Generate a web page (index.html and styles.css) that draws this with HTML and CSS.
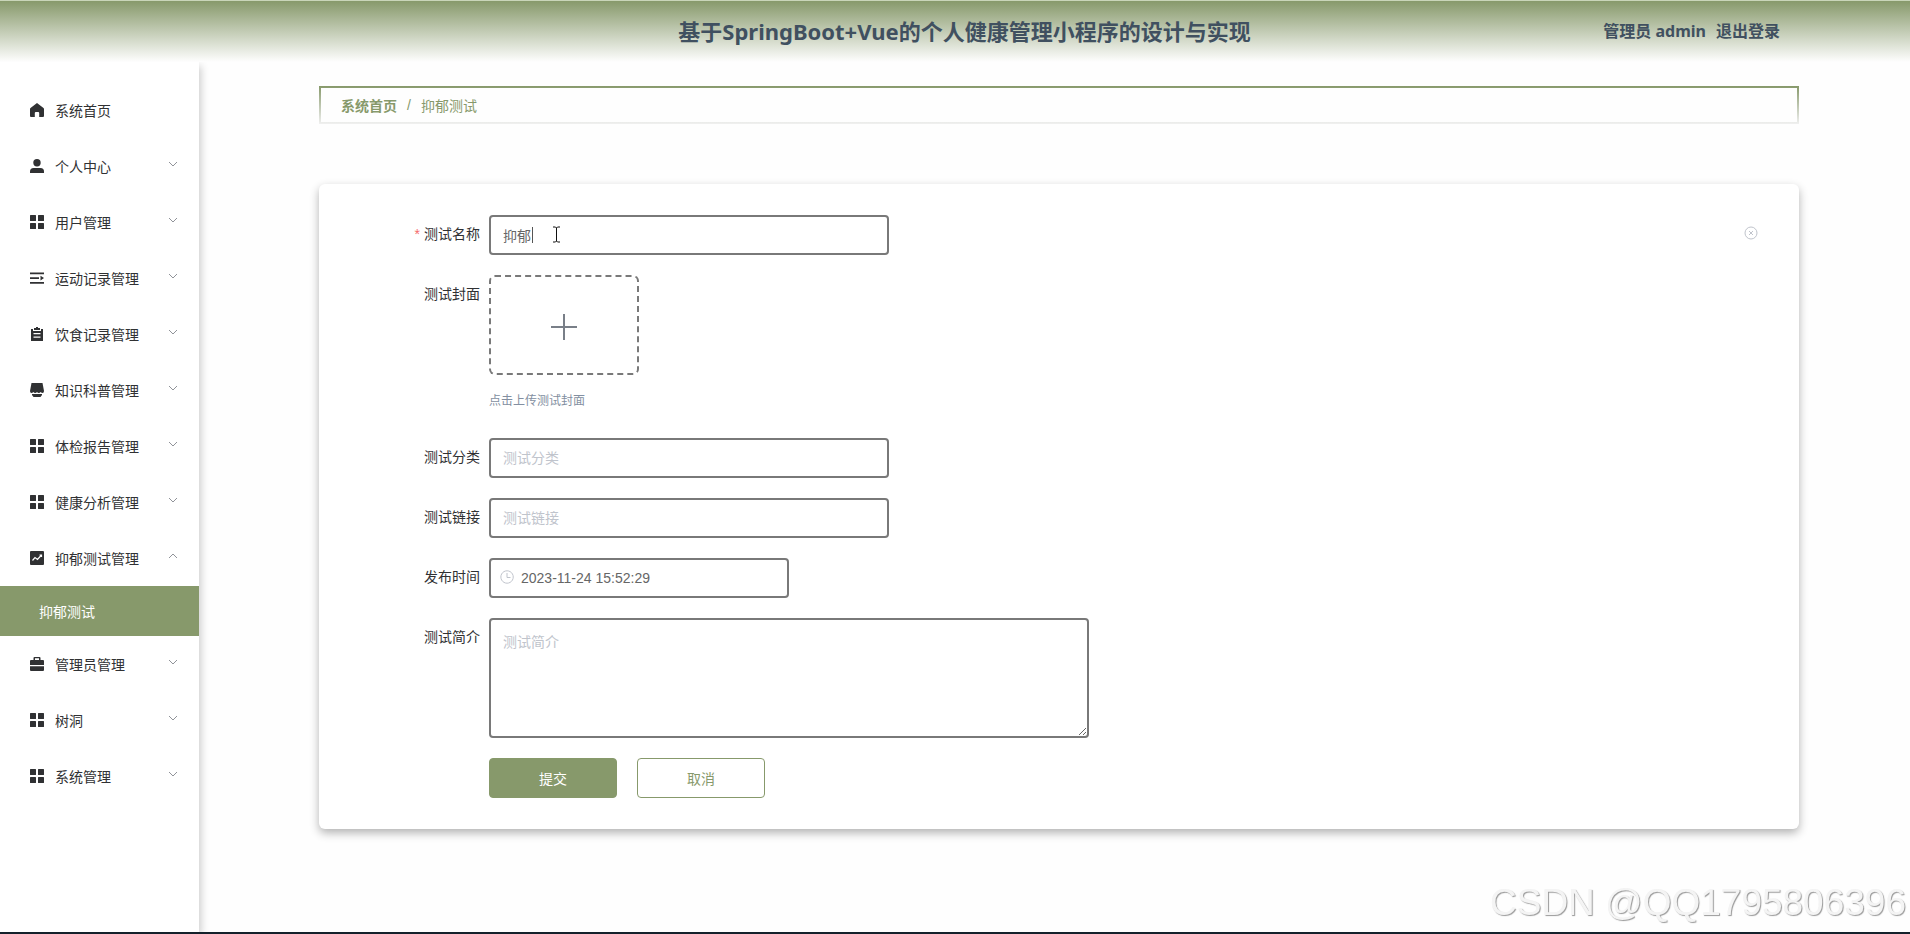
FILE: index.html
```
<!DOCTYPE html>
<html lang="zh-CN">
<head>
<meta charset="UTF-8">
<meta name="viewport" content="width=device-width, initial-scale=1.0">
<title>基于SpringBoot+Vue的个人健康管理小程序的设计与实现</title>
<link rel="stylesheet" href="styles.css">
</head>
<body>

<!-- Shared icons -->
<svg class="sprite" aria-hidden="true">
  <symbol id="i-menu" viewBox="0 0 14 14"><path d="M.6 0h4.8q.6 0 .6.6v4.8q0 .6-.6.6H.6Q0 6 0 5.400V.6Q0 0 .6 0zM8.600 0h4.800q.6 0 .6.6v4.800q0 .6-.6.6H8.600Q8 6 8 5.400V.6Q8 0 8.600 0zM.6 8h4.800q.6 0 .6.6v4.800q0 .6-.6.6H.6q-.6 0-.6-.6V8.600Q0 8 .6 8zM8.600 8h4.800q.6 0 .6.6v4.800q0 .6-.6.6H8.600q-.6 0-.6-.6V8.600Q8 8 8.600 8z"/></symbol>
  <symbol id="i-down" viewBox="0 0 10 10"><path d="M1 3l4 4 4-4" fill="none" stroke="currentColor"/></symbol>
  <symbol id="i-up" viewBox="0 0 10 10"><path d="M1 7l4-4 4 4" fill="none" stroke="currentColor"/></symbol>
</svg>

<header class="header">
  <h1 class="title">基于SpringBoot+Vue的个人健康管理小程序的设计与实现</h1>
  <div class="user">
    <span>管理员 admin</span>
    <a href="#">退出登录</a>
  </div>
</header>

<div class="container">
  <!-- Side menu -->
  <nav class="sidebar">
    <a class="item" href="#"><svg class="icon" viewBox="0 0 14 14"><path d="M7 0l6.500 5q.5.400.5 1v7q0 1-1 1H9.200v-4q0-1-1-1H5.800q-1 0-1 1v4H1q-1 0-1-1V6q0-.6.5-1z"/></svg><span>系统首页</span></a>
    <a class="item" href="#"><svg class="icon" viewBox="0 0 14 14"><circle cx="7" cy="3.700" r="3.700"/><path d="M0 14v-1.500Q0 9 3.500 9h7q3.500 0 3.500 3.500V14z"/></svg><span>个人中心</span><svg class="arrow"><use href="#i-down"/></svg></a>
    <a class="item" href="#"><svg class="icon"><use href="#i-menu"/></svg><span>用户管理</span><svg class="arrow"><use href="#i-down"/></svg></a>
    <a class="item" href="#"><svg class="icon" viewBox="0 0 14 14"><path d="M0 1.500h14v1.800H0zM0 6.200h9v1.800H0zM0 11h14v1.800H0zM10.500 4.800L14 7.100l-3.500 2.300z"/></svg><span>运动记录管理</span><svg class="arrow"><use href="#i-down"/></svg></a>
    <a class="item" href="#"><svg class="icon" viewBox="0 0 14 14"><path fill-rule="evenodd" d="M1 2h2v2h8V2h2v12H1zM3.500 6v1.200h7V6zM3.500 9.500v1.200h7V9.500zM4 1h2V0h2v1h2v2H4z"/></svg><span>饮食记录管理</span><svg class="arrow"><use href="#i-down"/></svg></a>
    <a class="item" href="#"><svg class="icon" viewBox="0 0 14 14"><path d="M1.500 0h11l1.500 8q0 2-1.500 2-1 0-1.800-1-.8 1-1.900 1T7 9Q6.300 10 5.200 10T3.300 9q-.8 1-1.800 1Q0 10 0 8zM2 11h10v1l-1.500 2h-7L2 12z"/></svg><span>知识科普管理</span><svg class="arrow"><use href="#i-down"/></svg></a>
    <a class="item" href="#"><svg class="icon"><use href="#i-menu"/></svg><span>体检报告管理</span><svg class="arrow"><use href="#i-down"/></svg></a>
    <a class="item" href="#"><svg class="icon"><use href="#i-menu"/></svg><span>健康分析管理</span><svg class="arrow"><use href="#i-down"/></svg></a>
    <a class="item" href="#"><svg class="icon" viewBox="0 0 14 14"><rect width="14" height="14" rx="1"/><path d="M2.500 9.500L5 6.500l2.500 2L11.500 4M9.500 4h2v2" fill="none" stroke="#fff" stroke-width="1.200"/></svg><span>抑郁测试管理</span><svg class="arrow"><use href="#i-up"/></svg></a>
    <a class="subitem" href="#">抑郁测试</a>
    <a class="item" href="#"><svg class="icon" viewBox="0 0 14 14"><path fill-rule="evenodd" d="M3.500 3V1q0-1 1-1h5q1 0 1 1v2H13q1 0 1 1v4H0V4q0-1 1-1zM5 3h4V1.300H5zM0 9.200h14V13q0 1-1 1H1q-1 0-1-1z"/></svg><span>管理员管理</span><svg class="arrow"><use href="#i-down"/></svg></a>
    <a class="item" href="#"><svg class="icon"><use href="#i-menu"/></svg><span>树洞</span><svg class="arrow"><use href="#i-down"/></svg></a>
    <a class="item" href="#"><svg class="icon"><use href="#i-menu"/></svg><span>系统管理</span><svg class="arrow"><use href="#i-down"/></svg></a>
  </nav>

  <main class="main">
    <div class="breadcrumb">
      <a href="#">系统首页</a>
      <span>/</span>
      <span>抑郁测试</span>
    </div>

    <form class="card">
      <div class="row">
        <label for="name"><i>*</i>测试名称</label>
        <div class="field">
          <input class="input" type="text" id="name" value="抑郁" required>
          <span class="caret"></span>
          <svg class="pointer" viewBox="0 0 9 17"><path d="M1 1h2.500l1 1 1-1H8M4.500 2v13M1 16h2.500l1-1 1 1H8" fill="none" stroke="#111"/></svg>
        </div>
        <button class="clear" type="button" aria-label="清空"><svg viewBox="0 0 14 14" width="14" height="14"><circle cx="7" cy="7" r="6" fill="none" stroke="currentColor"/><path d="M5 5l4 4M9 5l-4 4" stroke="currentColor"/></svg></button>
      </div>
      <div class="row">
        <label for="cover">测试封面</label>
        <div class="upload">
          <button class="upload-box" type="button" id="cover" aria-label="上传"><svg viewBox="0 0 26 26" width="26" height="26"><path d="M13 0v26M0 13h26" stroke="currentColor" stroke-width="2"/></svg></button>
          <p class="tip">点击上传测试封面</p>
        </div>
      </div>
      <div class="row">
        <label for="type">测试分类</label>
        <input class="input" type="text" id="type" placeholder="测试分类">
      </div>
      <div class="row">
        <label for="link">测试链接</label>
        <input class="input" type="text" id="link" placeholder="测试链接">
      </div>
      <div class="row">
        <label for="time">发布时间</label>
        <div class="field">
          <input class="input date" type="text" id="time" value="2023-11-24 15:52:29">
          <svg class="clock" viewBox="0 0 14 14"><path d="M7 3v4.500h3.500M7 .8a6.200 6.200 0 1 0 .1 0z" fill="none" stroke="currentColor"/></svg>
        </div>
      </div>
      <div class="row">
        <label for="intro">测试简介</label>
        <textarea class="input textarea" id="intro" placeholder="测试简介"></textarea>
      </div>
      <div class="buttons">
        <button class="btn submit" type="submit">提交</button>
        <button class="btn cancel" type="button">取消</button>
      </div>
    </form>
  </main>
</div>

<div class="watermark">CSDN @QQ1795806396</div>

</body>
</html>
```

FILE: styles.css
```
* {
  box-sizing: border-box;
}

body {
  margin: 0;
  min-height: 100vh;
  display: flex;
  flex-direction: column;
  border-bottom: 2px solid #14212b;
  background: #fefefe;
  color: #303133;
  font-family: "Liberation Sans", "Noto Sans CJK SC", sans-serif;
  font-size: 14px;
}

a {
  color: inherit;
  text-decoration: none;
}

.sprite {
  display: none;
}

/* Header */
.header {
  display: grid;
  grid-template-columns: 1fr auto 1fr;
  align-items: center;
  height: 62px;
  padding: 0 130px 4px 149px;
  border-top: 1px solid #c9d5b9;
  background: linear-gradient(#87996b, #fefefe);
  color: #405060;
  font-family: "Noto Sans", "Noto Sans CJK SC", sans-serif;
  font-weight: bold;
}

.title {
  grid-column: 2;
  margin: 0;
  font-size: 22px;
}

.user {
  display: flex;
  justify-content: flex-end;
  gap: 10px;
  font-size: 16px;
}

.container {
  flex: 1;
  display: flex;
}

/* Side menu */
.sidebar {
  flex: none;
  width: 199px;
  padding-top: 20px;
  background: #fff;
  box-shadow: 2px 4px 8px rgba(0,0,0,0.2);
  clip-path: inset(0 -20px 0 0);
}

.item {
  display: flex;
  align-items: center;
  height: 56px;
  padding: 0 21px 0 30px;
}

.icon {
  width: 14px;
  height: 14px;
  margin-right: 11px;
  fill: #303133;
}

.arrow {
  width: 10px;
  height: 10px;
  margin: 0 0 4px auto;
  color: #909399;
}

.subitem {
  display: flex;
  align-items: center;
  height: 50px;
  padding-left: 39px;
  background: #87996b;
  color: #fff;
}

/* Content */
.main {
  flex: 1;
  padding: 24px 111px 40px 120px;
}

.breadcrumb {
  display: flex;
  align-items: center;
  gap: 10px;
  height: 38px;
  padding-left: 20px;
  border: 2px solid;
  border-image: linear-gradient(#87996b, #f0f0f0) 2;
  color: #87996b;
}

.breadcrumb a {
  font-weight: bold;
}

.card {
  margin-top: 60px;
  padding: 31px 40px;
  border-radius: 6px;
  background: #fff;
  box-shadow: 0 4px 10px rgba(0,0,0,0.3);
}

.row {
  display: flex;
  align-items: flex-start;
  margin-bottom: 20px;
}

.row label {
  width: 130px;
  padding-right: 9px;
  line-height: 38px;
  text-align: right;
}

.row label i {
  margin-right: 4px;
  color: #f56c6c;
  font-style: normal;
}

.field {
  position: relative;
  display: flex;
}

.input {
  width: 400px;
  height: 40px;
  padding: 0 12px;
  border: 2px solid #797979;
  border-radius: 4px;
  background: #fff;
  color: #666;
  font: inherit;
  outline: none;
}

.input::placeholder {
  color: #c0c4cc;
}

.date {
  width: 300px;
  padding-left: 30px;
}

.textarea {
  width: 600px;
  height: 120px;
  padding: 11px 12px;
}

/* Over the text boxes */
.caret {
  position: absolute;
  left: 43px;
  top: 12px;
  width: 1px;
  height: 16px;
  background: #555;
}

.pointer {
  position: absolute;
  left: 63px;
  top: 11px;
  width: 9px;
  height: 17px;
}

.clock {
  position: absolute;
  left: 11px;
  top: 12px;
  width: 14px;
  height: 14px;
  color: #c0c4cc;
}

.clear {
  display: flex;
  margin: 11px 1px 0 auto;
  padding: 0;
  border: none;
  background: none;
  color: #c0c4cc;
}

.upload-box {
  display: flex;
  align-items: center;
  justify-content: center;
  width: 150px;
  height: 100px;
  padding: 4px 0 0;
  border: 2px dashed #797979;
  border-radius: 6px;
  background: #fff;
  color: #797f88;
}

.tip {
  margin: 16px 0 7px;
  color: #838fa1;
  font-size: 12px;
  line-height: 20px;
}

.buttons {
  display: flex;
  gap: 20px;
  padding-left: 130px;
}

.btn {
  width: 128px;
  height: 40px;
  border: 1px solid #87996b;
  border-radius: 4px;
  background: #fff;
  color: #87996b;
  font: inherit;
}

.submit {
  background: #87996b;
  color: #fff;
}

.watermark {
  position: fixed;
  right: 4px;
  bottom: 10px;
  color: #f4f4f4;
  font-size: 37px;
  line-height: 42px;
  text-shadow: 1px 1px 1px #999;
}
```
